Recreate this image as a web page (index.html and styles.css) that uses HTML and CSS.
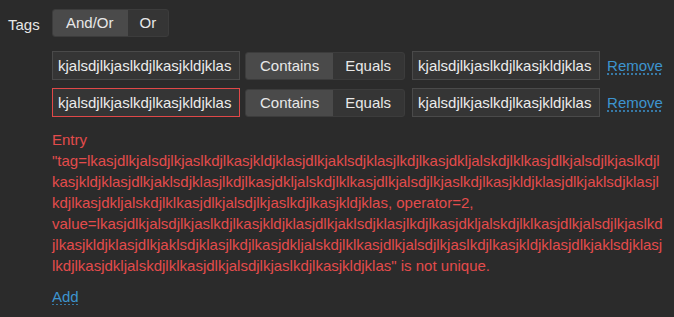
FILE: index.html
```html
<!DOCTYPE html>
<html>
<head>
<meta charset="utf-8">
<link rel="stylesheet" href="styles.css">
</head>
<body>
<div class="field">
  <div class="label">Tags</div>
  <div class="content">
    <div class="seg seg-top">
      <span class="seg-btn active andor">And/Or</span>
      <span class="seg-btn or">Or</span>
    </div>
    <div class="rows">
      <div class="row">
        <input class="txt" value="kjalsdjlkjaslkdjlkasjkldjklas">
        <div class="seg seg-op">
          <span class="seg-btn active contains">Contains</span>
          <span class="seg-btn equals">Equals</span>
        </div>
        <input class="txt" value="kjalsdjlkjaslkdjlkasjkldjklas">
        <a class="link remove">Remove</a>
      </div>
      <div class="row">
        <input class="txt invalid" value="kjalsdjlkjaslkdjlkasjkldjklas">
        <div class="seg seg-op">
          <span class="seg-btn active contains">Contains</span>
          <span class="seg-btn equals">Equals</span>
        </div>
        <input class="txt" value="kjalsdjlkjaslkdjlkasjkldjklas">
        <a class="link remove">Remove</a>
      </div>
    </div>
    <div class="error">Entry "tag=lkasjdlkjalsdjlkjaslkdjlkasjkldjklasjdlkjaklsdjklasjlkdjlkasjdkljalskdjlklkasjdlkjalsdjlkjaslkdjlkasjkldjklasjdlkjaklsdjklasjlkdjlkasjdkljalskdjlklkasjdlkjalsdjlkjaslkdjlkasjkldjklasjdlkjaklsdjklasjlkdjlkasjdkljalskdjlklkasjdlkjalsdjlkjaslkdjlkasjkldjklas, operator=2, value=lkasjdlkjalsdjlkjaslkdjlkasjkldjklasjdlkjaklsdjklasjlkdjlkasjdkljalskdjlklkasjdlkjalsdjlkjaslkdjlkasjkldjklasjdlkjaklsdjklasjlkdjlkasjdkljalskdjlklkasjdlkjalsdjlkjaslkdjlkasjkldjklasjdlkjaklsdjklasjlkdjlkasjdkljalskdjlklkasjdlkjalsdjlkjaslkdjlkasjkldjklas" is not unique.</div>
    <a class="link add">Add</a>
  </div>
</div>
</body>
</html>
```
FILE: styles.css
```css
html, body {
  background: #2b2b2b;
}
body {
  margin: 8px;
  font-family: "Liberation Sans", Arial, sans-serif;
  font-size: 15px;
  color: #e6e6e6;
}
.field {
  display: grid;
  grid-template-columns: 44px 1fr;
}
.label {
  padding-top: 8px;
  line-height: 17px;
}
.content {
  display: flex;
  flex-direction: column;
  align-items: flex-start;
}
.seg {
  display: flex;
  border: 1px solid #3c3c3c;
  border-radius: 3px;
  overflow: hidden;
  background: #353535;
}
.seg-top {
  margin-top: 1px;
}
.seg-btn {
  display: block;
  height: 26px;
  line-height: 26px;
  padding: 0 13px;
  color: #e8e8e8;
}
.seg-btn.active {
  background: #4a4a4a;
}
.andor { padding: 0 14px 0 13px; }
.or { padding: 0 12px; }
.contains { padding: 0 14px; }
.equals { padding: 0 13px 0 12px; }
.rows {
  display: flex;
  flex-direction: column;
  gap: 8px;
  margin-top: 14px;
}
.row {
  display: flex;
  align-items: center;
}
.txt {
  box-sizing: border-box;
  width: 188px;
  height: 29px;
  margin: 0;
  padding: 0 5px;
  background: #353535;
  border: 1px solid #4a4a4a;
  border-radius: 0;
  color: #ececec;
  font-family: "Liberation Sans", Arial, sans-serif;
  font-size: 15px;
  outline: none;
}
.txt.invalid {
  border-color: #e04848;
}
.seg-op {
  margin-left: 5px;
  margin-right: 7px;
}
.link {
  color: #3d94cf;
  text-decoration: underline dotted;
  text-underline-offset: 3px;
  cursor: pointer;
}
.remove {
  margin-left: 7px;
}
.error {
  margin-top: 12px;
  color: #e34c4c;
  line-height: 21px;
  overflow-wrap: break-word;
  width: 611px;
}
.add {
  margin-top: 12px;
}
```
